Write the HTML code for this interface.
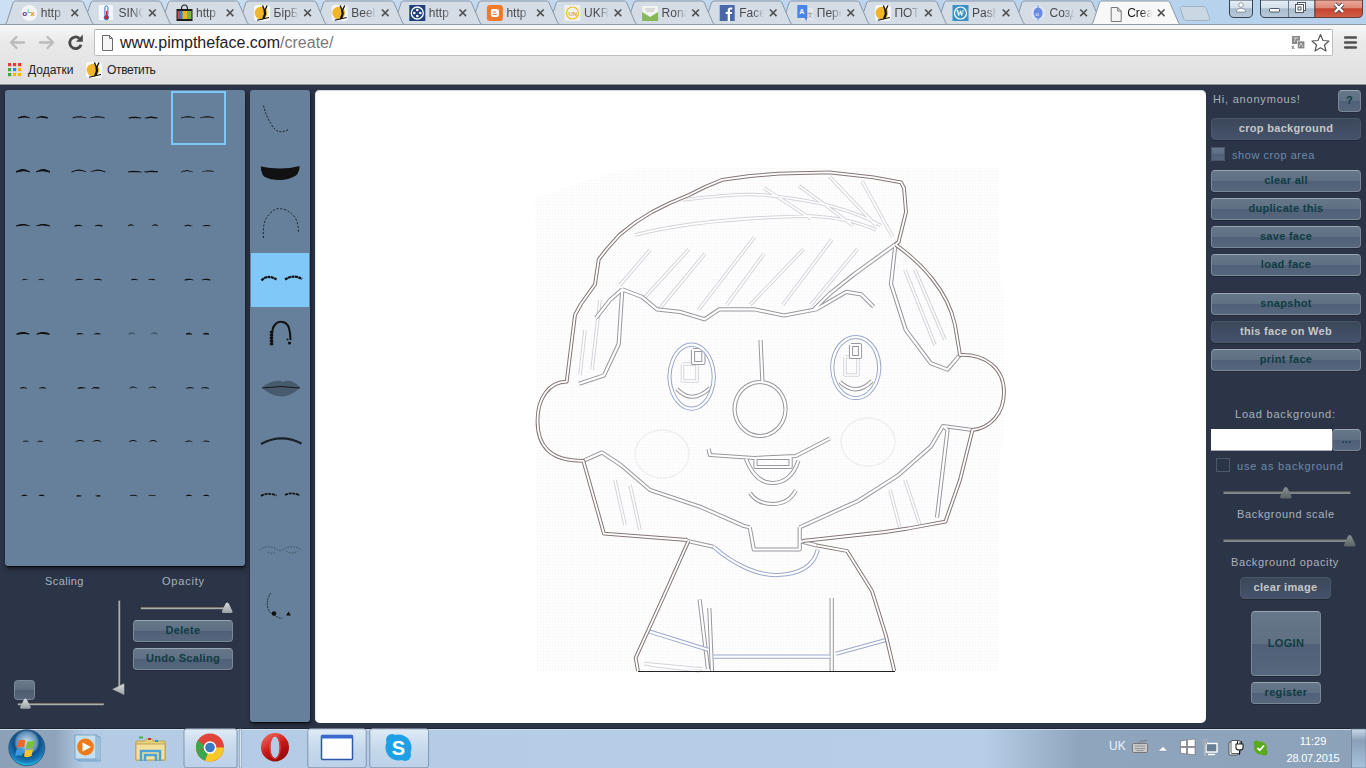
<!DOCTYPE html>
<html><head><meta charset="utf-8">
<style>
*{margin:0;padding:0;box-sizing:border-box}
html,body{width:1366px;height:768px;overflow:hidden;font-family:"Liberation Sans",sans-serif}
body{position:relative;background:#2c3547}
.a{position:absolute}
/* chrome frame */
#frame{left:0;top:0;width:1366px;height:25px;background:linear-gradient(90deg,#cde0f3 0%,#c4daf0 30%,#bad4ee 70%,#b5d1ec 100%)}
.tab{position:absolute;top:1px;height:24px;width:94px}
.tab svg{position:absolute;left:0;top:0}
.tab .fi{position:absolute;left:14px;top:4px;width:16px;height:16px}
.tab .tt{position:absolute;left:34px;top:4px;font-size:12px;color:#3c3c3c;width:24px;overflow:hidden;white-space:nowrap;line-height:14px}
.tab .cx{position:absolute;left:64px;top:5px;width:10px;height:10px}
#toolbar{left:0;top:25px;width:1366px;height:60px;background:linear-gradient(#f7f7f7,#e9e9e9 30%,#dfdfdf)}
#omni{left:94px;top:29px;width:1239px;height:27px;background:#fff;border:1px solid #bdbdbd;border-top-color:#a9a9a9;border-radius:2px}
#url{left:120px;top:34px;font-size:16px;color:#222;line-height:18px;white-space:nowrap}
#url span{color:#7a7a7a}
.bm{font-size:12px;color:#222;line-height:14px;white-space:nowrap}
/* page */
.panel{background:#66809b;border-radius:3px}
.lbl{font-size:11px;color:#a9b2bb;letter-spacing:0.8px;white-space:nowrap;line-height:12px}
.btn{position:absolute;border-radius:4px;border:1px solid #7b8797;border-top-color:#9aa6b3;background:linear-gradient(#66778a 0%,#5f7084 50%,#506078 50%,#56667c 100%);font-weight:bold;font-size:11px;color:#0f3d43;text-align:center;letter-spacing:0.3px;white-space:nowrap;box-shadow:0 1px 0 #22293a}
.btn.dis{background:linear-gradient(#3b475a,#45526a);border-color:#4b5668;color:#c4c8c9}
.chk{position:absolute;width:14px;height:14px;border:1px solid #4a5668;background:linear-gradient(#66778a 0%,#5c6d82 50%,#4e5f77 50%,#56667c 100%)}
.track{position:absolute;height:3px;border-top:1px solid #7d7a6e;border-bottom:1px solid #aeb2b0;background:#5d6270}
/* taskbar */
#task{left:0;top:728px;width:1366px;height:40px;background:linear-gradient(90deg,#8ea2b8 0px,#a9c2dc 100px,#b6d0ea 180px,#b4cde6 950px,#95aac0 1080px,#8ca1b8 1366px);border-top:1px solid #dfe9f3}
.tb{position:absolute;top:1px;height:39px;border:1px solid #7a8ea4;border-radius:3px;background:linear-gradient(#d8e6f4,#bcd3ea 50%,#b1c9e2)}
.clock{color:#fff;font-size:11px;text-align:center;white-space:nowrap;line-height:13px}
</style></head>
<body>
<!-- FRAME / TABS -->
<div id="frame" class="a"></div>
<!--TABS--><svg class="a" style="left:0;top:0" width="1366" height="25">
<defs><linearGradient id="tfade" x1="0" x2="1"><stop offset="0.55" stop-color="#fff" stop-opacity="1"/><stop offset="1" stop-color="#fff" stop-opacity="0"/></linearGradient>
<mask id="fm" maskUnits="userSpaceOnUse" x="0" y="0" width="25" height="25"><rect x="0" y="0" width="25" height="25" fill="url(#tfade)"/></mask></defs>
<path d="M1012.3,24.5 C1014.3,24.5 1015.1,23.5 1015.6,22 L1021.8,3 C1022.4,1.5 1023.3,1 1025.3,1 L1088.9,1 C1090.9,1 1091.8,1.5 1092.4,3 L1100.6,22 C1101.1,23.5 1101.9,24.5 1103.9,24.5" fill="#d4dce6" stroke="#8a97a6" stroke-width="1"/>
<g transform="translate(1030.1,5)"><circle cx="8" cy="8" r="7" fill="#e0e6f2"/><path d="M8 0.5 L8 15.5" stroke="#6a8ae8" stroke-width="1"/><ellipse cx="8" cy="8" rx="4.5" ry="5.5" fill="#6a8ae8"/><text x="5.5" y="10.5" font-size="6" fill="#fff" font-family="Liberation Sans">u</text></g>
<g transform="translate(1049.6,0)"><text x="0" y="17" font-size="12" fill="#4a4a4a" font-family="Liberation Sans" mask="url(#fm)">Созд</text></g>
<path d="M1080.3,9.5 L1086.9,16.1 M1086.9,9.5 L1080.3,16.1" stroke="#505050" stroke-width="1.6"/>
<path d="M934.7,24.5 C936.7,24.5 937.5,23.5 938.0,22 L944.2,3 C944.8,1.5 945.7,1 947.7,1 L1011.3,1 C1013.3,1 1014.2,1.5 1014.8,3 L1023.0,22 C1023.5,23.5 1024.3,24.5 1026.3,24.5" fill="#d4dce6" stroke="#8a97a6" stroke-width="1"/>
<g transform="translate(952.5,5)"><rect x="0" y="0" width="16" height="16" fill="#3a91c4"/><circle cx="8" cy="8" r="6" fill="none" stroke="#fff" stroke-width="1.2"/><text x="3.4" y="11" font-size="8" fill="#fff" font-family="Liberation Serif" font-weight="bold">W</text></g>
<g transform="translate(972.0,0)"><text x="0" y="17" font-size="12" fill="#4a4a4a" font-family="Liberation Sans" mask="url(#fm)">Pashа</text></g>
<path d="M1002.7,9.5 L1009.3,16.1 M1009.3,9.5 L1002.7,16.1" stroke="#505050" stroke-width="1.6"/>
<path d="M857.1,24.5 C859.1,24.5 859.9,23.5 860.4,22 L866.6,3 C867.2,1.5 868.1,1 870.1,1 L933.7,1 C935.7,1 936.6,1.5 937.2,3 L945.4,22 C945.9,23.5 946.7,24.5 948.7,24.5" fill="#d4dce6" stroke="#8a97a6" stroke-width="1"/>
<g transform="translate(874.9,5)"><rect x="0" y="0" width="16" height="16" rx="3" fill="#f6f6f6"/><circle cx="7" cy="8" r="6.3" fill="#f0b628"/><path d="M8.5 0.5 L10.5 6 L13 0.5" stroke="#111" stroke-width="1.3" fill="none"/><path d="M10.5 5.5 L11 9 L9.5 13" stroke="#111" stroke-width="2.2" fill="none"/><path d="M9.5 12 L8.5 14.5 M3 15.2 L15 12.5" stroke="#111" stroke-width="1.1" fill="none"/></g>
<g transform="translate(894.4,0)"><text x="0" y="17" font-size="12" fill="#4a4a4a" font-family="Liberation Sans" mask="url(#fm)">ПОТ</text></g>
<path d="M925.1,9.5 L931.7,16.1 M931.7,9.5 L925.1,16.1" stroke="#505050" stroke-width="1.6"/>
<path d="M779.5,24.5 C781.5,24.5 782.3,23.5 782.8,22 L789.0,3 C789.6,1.5 790.5,1 792.5,1 L856.1,1 C858.1,1 859.0,1.5 859.6,3 L867.8,22 C868.3,23.5 869.1,24.5 871.1,24.5" fill="#d4dce6" stroke="#8a97a6" stroke-width="1"/>
<g transform="translate(797.3,5)"><rect x="4" y="3" width="12" height="12" fill="#e6e6e6"/><path d="M0 0 H10 V13 L9 16 L7 13 H0Z" fill="#4a86e8"/><text x="2" y="9" font-size="7" fill="#fff" font-family="Liberation Sans" font-weight="bold">A</text><text x="10" y="12" font-size="6" fill="#888" font-family="Liberation Sans">文</text></g>
<g transform="translate(816.8,0)"><text x="0" y="17" font-size="12" fill="#4a4a4a" font-family="Liberation Sans" mask="url(#fm)">Пере</text></g>
<path d="M847.5,9.5 L854.1,16.1 M854.1,9.5 L847.5,16.1" stroke="#505050" stroke-width="1.6"/>
<path d="M701.9,24.5 C703.9,24.5 704.7,23.5 705.2,22 L711.4,3 C712.0,1.5 712.9,1 714.9,1 L778.5,1 C780.5,1 781.4,1.5 782.0,3 L790.2,22 C790.7,23.5 791.5,24.5 793.5,24.5" fill="#d4dce6" stroke="#8a97a6" stroke-width="1"/>
<g transform="translate(719.7,5)"><rect x="0" y="0" width="15" height="16" fill="#4a67a8"/><path d="M8 16 V9 H6 V7 H8 V5 Q8 2.5 11 2.5 H12.5 V4.5 H11 Q10.3 4.5 10.3 5.3 V7 H12.5 L12.2 9 H10.3 V16Z" fill="#fff"/></g>
<g transform="translate(739.2,0)"><text x="0" y="17" font-size="12" fill="#4a4a4a" font-family="Liberation Sans" mask="url(#fm)">Face</text></g>
<path d="M769.9,9.5 L776.5,16.1 M776.5,9.5 L769.9,16.1" stroke="#505050" stroke-width="1.6"/>
<path d="M624.3,24.5 C626.3,24.5 627.1,23.5 627.6,22 L633.8,3 C634.4,1.5 635.3,1 637.3,1 L700.9,1 C702.9,1 703.8,1.5 704.4,3 L712.6,22 C713.1,23.5 713.9,24.5 715.9,24.5" fill="#d4dce6" stroke="#8a97a6" stroke-width="1"/>
<g transform="translate(642.1,5)"><rect x="0" y="1" width="16" height="15" fill="#86b85a"/><path d="M0 7 L8 12 L16 7 L16 1 L0 1Z" fill="#f2f2f2"/><path d="M3 4 H13 M4 6 H12" stroke="#9a9a9a" stroke-width="0.6"/></g>
<g transform="translate(661.6,0)"><text x="0" y="17" font-size="12" fill="#4a4a4a" font-family="Liberation Sans" mask="url(#fm)">Ronaldo</text></g>
<path d="M692.3,9.5 L698.9,16.1 M698.9,9.5 L692.3,16.1" stroke="#505050" stroke-width="1.6"/>
<path d="M546.7,24.5 C548.7,24.5 549.5,23.5 550.0,22 L556.2,3 C556.8,1.5 557.7,1 559.7,1 L623.3,1 C625.3,1 626.2,1.5 626.8,3 L635.0,22 C635.5,23.5 636.3,24.5 638.3,24.5" fill="#d4dce6" stroke="#8a97a6" stroke-width="1"/>
<g transform="translate(564.5,5)"><rect x="0" y="0" width="16" height="16" fill="#eef0f2"/><circle cx="8" cy="8" r="6" fill="none" stroke="#f0c020" stroke-width="1.2"/><text x="4" y="10.5" font-size="6" fill="#e0b010" font-family="Liberation Sans" font-weight="bold">UN</text></g>
<g transform="translate(584.0,0)"><text x="0" y="17" font-size="12" fill="#4a4a4a" font-family="Liberation Sans" mask="url(#fm)">UKR</text></g>
<path d="M614.7,9.5 L621.3,16.1 M621.3,9.5 L614.7,16.1" stroke="#505050" stroke-width="1.6"/>
<path d="M469.1,24.5 C471.1,24.5 471.9,23.5 472.4,22 L478.6,3 C479.2,1.5 480.1,1 482.1,1 L545.7,1 C547.7,1 548.6,1.5 549.2,3 L557.4,22 C557.9,23.5 558.7,24.5 560.7,24.5" fill="#d4dce6" stroke="#8a97a6" stroke-width="1"/>
<g transform="translate(486.9,5)"><rect x="0" y="0" width="16" height="16" rx="3" fill="#f07a2a"/><rect x="4" y="4" width="8" height="8" rx="2" fill="#fff"/><rect x="6" y="6.5" width="3" height="1" fill="#f07a2a"/><rect x="6" y="9" width="4" height="1" fill="#f07a2a"/></g>
<g transform="translate(506.4,0)"><text x="0" y="17" font-size="12" fill="#4a4a4a" font-family="Liberation Sans" mask="url(#fm)">http</text></g>
<path d="M537.1,9.5 L543.7,16.1 M543.7,9.5 L537.1,16.1" stroke="#505050" stroke-width="1.6"/>
<path d="M391.5,24.5 C393.5,24.5 394.3,23.5 394.8,22 L401.0,3 C401.6,1.5 402.5,1 404.5,1 L468.1,1 C470.1,1 471.0,1.5 471.6,3 L479.8,22 C480.3,23.5 481.1,24.5 483.1,24.5" fill="#d4dce6" stroke="#8a97a6" stroke-width="1"/>
<g transform="translate(409.3,5)"><rect x="0" y="0" width="16" height="16" fill="#1e3f7a"/><circle cx="8" cy="8" r="6" fill="none" stroke="#fff" stroke-width="1.3"/><circle cx="8" cy="5" r="1.3" fill="#fff"/><circle cx="8" cy="11" r="1.3" fill="#fff"/><circle cx="5" cy="8" r="1.3" fill="#fff"/><circle cx="11" cy="8" r="1.3" fill="#fff"/></g>
<g transform="translate(428.8,0)"><text x="0" y="17" font-size="12" fill="#4a4a4a" font-family="Liberation Sans" mask="url(#fm)">http</text></g>
<path d="M459.5,9.5 L466.1,16.1 M466.1,9.5 L459.5,16.1" stroke="#505050" stroke-width="1.6"/>
<path d="M313.9,24.5 C315.9,24.5 316.7,23.5 317.2,22 L323.4,3 C324.0,1.5 324.9,1 326.9,1 L390.5,1 C392.5,1 393.4,1.5 394.0,3 L402.2,22 C402.7,23.5 403.5,24.5 405.5,24.5" fill="#d4dce6" stroke="#8a97a6" stroke-width="1"/>
<g transform="translate(331.7,5)"><rect x="0" y="0" width="16" height="16" rx="3" fill="#f6f6f6"/><circle cx="7" cy="8" r="6.3" fill="#f0b628"/><path d="M8.5 0.5 L10.5 6 L13 0.5" stroke="#111" stroke-width="1.3" fill="none"/><path d="M10.5 5.5 L11 9 L9.5 13" stroke="#111" stroke-width="2.2" fill="none"/><path d="M9.5 12 L8.5 14.5 M3 15.2 L15 12.5" stroke="#111" stroke-width="1.1" fill="none"/></g>
<g transform="translate(351.2,0)"><text x="0" y="17" font-size="12" fill="#4a4a4a" font-family="Liberation Sans" mask="url(#fm)">Beeline</text></g>
<path d="M381.9,9.5 L388.5,16.1 M388.5,9.5 L381.9,16.1" stroke="#505050" stroke-width="1.6"/>
<path d="M236.3,24.5 C238.3,24.5 239.1,23.5 239.6,22 L245.8,3 C246.4,1.5 247.3,1 249.3,1 L312.9,1 C314.9,1 315.8,1.5 316.4,3 L324.6,22 C325.1,23.5 325.9,24.5 327.9,24.5" fill="#d4dce6" stroke="#8a97a6" stroke-width="1"/>
<g transform="translate(254.1,5)"><rect x="0" y="0" width="16" height="16" rx="3" fill="#f6f6f6"/><circle cx="7" cy="8" r="6.3" fill="#f0b628"/><path d="M8.5 0.5 L10.5 6 L13 0.5" stroke="#111" stroke-width="1.3" fill="none"/><path d="M10.5 5.5 L11 9 L9.5 13" stroke="#111" stroke-width="2.2" fill="none"/><path d="M9.5 12 L8.5 14.5 M3 15.2 L15 12.5" stroke="#111" stroke-width="1.1" fill="none"/></g>
<g transform="translate(273.6,0)"><text x="0" y="17" font-size="12" fill="#4a4a4a" font-family="Liberation Sans" mask="url(#fm)">БірБ</text></g>
<path d="M304.3,9.5 L310.9,16.1 M310.9,9.5 L304.3,16.1" stroke="#505050" stroke-width="1.6"/>
<path d="M158.7,24.5 C160.7,24.5 161.5,23.5 162.0,22 L168.2,3 C168.8,1.5 169.7,1 171.7,1 L235.3,1 C237.3,1 238.2,1.5 238.8,3 L247.0,22 C247.5,23.5 248.3,24.5 250.3,24.5" fill="#d4dce6" stroke="#8a97a6" stroke-width="1"/>
<g transform="translate(176.5,5)"><path d="M5 4 Q5 0 8 0 Q11 0 11 4" fill="none" stroke="#222" stroke-width="1.2"/><rect x="0" y="4" width="16" height="12" fill="#1d1d1d"/><rect x="1" y="6" width="4.5" height="8" fill="#e0403a"/><rect x="5.5" y="6" width="5" height="8" fill="#f3b21b"/><rect x="10.5" y="6" width="4.5" height="8" fill="#7db540"/><rect x="3" y="6" width="3" height="8" fill="#2a7fd0"/></g>
<g transform="translate(196.0,0)"><text x="0" y="17" font-size="12" fill="#4a4a4a" font-family="Liberation Sans" mask="url(#fm)">http</text></g>
<path d="M226.7,9.5 L233.3,16.1 M233.3,9.5 L226.7,16.1" stroke="#505050" stroke-width="1.6"/>
<path d="M81.1,24.5 C83.1,24.5 83.9,23.5 84.4,22 L90.6,3 C91.2,1.5 92.1,1 94.1,1 L157.7,1 C159.7,1 160.6,1.5 161.2,3 L169.4,22 C169.9,23.5 170.7,24.5 172.7,24.5" fill="#d4dce6" stroke="#8a97a6" stroke-width="1"/>
<g transform="translate(98.9,5)"><rect x="0" y="0" width="14" height="15" fill="#f4f7fb"/><rect x="6" y="1" width="3" height="10" rx="1.5" fill="#fff" stroke="#2a6ad0" stroke-width="1"/><rect x="7" y="6" width="1.6" height="6" fill="#e02020"/><circle cx="7.5" cy="12.5" r="2.3" fill="#e02020" stroke="#2a6ad0" stroke-width="0.8"/></g>
<g transform="translate(118.4,0)"><text x="0" y="17" font-size="12" fill="#4a4a4a" font-family="Liberation Sans" mask="url(#fm)">SINOP</text></g>
<path d="M149.1,9.5 L155.7,16.1 M155.7,9.5 L149.1,16.1" stroke="#505050" stroke-width="1.6"/>
<path d="M3.5,24.5 C5.5,24.5 6.3,23.5 6.8,22 L13.0,3 C13.6,1.5 14.5,1 16.5,1 L80.1,1 C82.1,1 83.0,1.5 83.6,3 L91.8,22 C92.3,23.5 93.1,24.5 95.1,24.5" fill="#d4dce6" stroke="#8a97a6" stroke-width="1"/>
<g transform="translate(21.3,5)"><circle cx="8" cy="8" r="8" fill="#f4f4f4"/><text x="1" y="11" font-size="8" font-weight="bold" fill="#6a2c91" font-family="Liberation Sans">o</text><text x="6" y="8" font-size="6" fill="#3fa33a" font-family="Liberation Sans">L</text><text x="9" y="11" font-size="8" font-weight="bold" fill="#f08a1c" font-family="Liberation Sans">x</text></g>
<g transform="translate(40.8,0)"><text x="0" y="17" font-size="12" fill="#4a4a4a" font-family="Liberation Sans" mask="url(#fm)">http</text></g>
<path d="M71.5,9.5 L78.1,16.1 M78.1,9.5 L71.5,16.1" stroke="#505050" stroke-width="1.6"/>
<path d="M1089.9,24.5 C1091.9,24.5 1092.7,23.5 1093.2,22 L1099.4,3 C1100.0,1.5 1100.9,1 1102.9,1 L1166.5,1 C1168.5,1 1169.4,1.5 1170.0,3 L1178.2,22 C1178.7,23.5 1179.5,24.5 1181.5,24.5" fill="#f8f8f8" stroke="#8f9aa5" stroke-width="1"/>
<rect x="1091.7" y="24" width="100" height="1.5" fill="#f8f8f8"/>
<g transform="translate(1107.7,5)"><path d="M3.5 2.5 H10 L13.5 6 V16.5 H3.5Z" fill="#f4f4f4" stroke="#777" stroke-width="1"/><path d="M10 2.5 V6 H13.5" fill="none" stroke="#777" stroke-width="1"/></g>
<g transform="translate(1127.2,0)"><text x="0" y="17" font-size="12" fill="#1a1a1a" font-family="Liberation Sans" mask="url(#fm)">Crea</text></g>
<path d="M1157.9,9.5 L1164.5,16.1 M1164.5,9.5 L1157.9,16.1" stroke="#505050" stroke-width="1.6"/>
<path d="M1182.5,6.5 L1203,6.5 C1205,6.5 1206,7.5 1206.5,9 L1209.5,18 C1210,19.5 1209,20.5 1207,20.5 L1187,20.5 C1185,20.5 1184,19.5 1183.5,18 L1180.5,9 C1180,7.5 1180.5,6.5 1182.5,6.5Z" fill="#cbd8e4" stroke="#9fb2c6" stroke-width="1"/>
</svg><!--/TABS-->

<div id="toolbar" class="a"></div>
<div class="a" style="left:0;top:24px;width:1366px;height:1px;background:#8f9aa5"></div>
<div class="a" style="left:0;top:83px;width:1366px;height:1px;background:#e7e7e7"></div>
<div class="a" style="left:0;top:84px;width:1366px;height:1px;background:#8a8f96"></div>
<div id="omni" class="a"></div>
<!--CHROME-->
<svg class="a" style="left:0;top:0" width="1366" height="85">
<defs>
<linearGradient id="wb" x1="0" y1="0" x2="0" y2="1"><stop offset="0" stop-color="#e6eef6"/><stop offset="0.45" stop-color="#d3dfeb"/><stop offset="0.5" stop-color="#a9bccf"/><stop offset="1" stop-color="#b8c9da"/></linearGradient>
<linearGradient id="wc" x1="0" y1="0" x2="0" y2="1"><stop offset="0" stop-color="#ecaa9c"/><stop offset="0.45" stop-color="#dd8a78"/><stop offset="0.5" stop-color="#c4422c"/><stop offset="1" stop-color="#d0604a"/></linearGradient>
</defs>
<path d="M1229.5,0 V13 Q1229.5,17.5 1234,17.5 H1248 Q1252.5,17.5 1252.5,13 V0Z" fill="url(#wb)" stroke="#3a4450" stroke-width="1"/>
<circle cx="1241" cy="5" r="2.3" fill="#fff" stroke="#4a5563" stroke-width="0.5"/>
<path d="M1236.5,12 Q1236.5,8.3 1241,8.3 Q1245.5,8.3 1245.5,12Z" fill="#fff" stroke="#4a5563" stroke-width="0.5"/>
<path d="M1260.5,0 V13 Q1260.5,17.5 1265,17.5 H1315 V0Z" fill="url(#wb)" stroke="#3a4450" stroke-width="1"/>
<path d="M1315,0 V17.5 H1358 Q1362.5,17.5 1362.5,13 V0Z" fill="url(#wc)" stroke="#6a3a34" stroke-width="1"/>
<line x1="1288.5" y1="0" x2="1288.5" y2="17" stroke="#6a7a8c" stroke-width="1"/>
<rect x="1269.5" y="8.5" width="10" height="3.5" rx="0.8" fill="#fff" stroke="#404a55" stroke-width="0.9"/>
<rect x="1297.5" y="2.5" width="8" height="8" fill="#fff" stroke="#404a55" stroke-width="0.9"/>
<rect x="1295.5" y="4.5" width="8" height="8" fill="#fff" stroke="#404a55" stroke-width="0.9"/>
<rect x="1298" y="7" width="3" height="3" fill="none" stroke="#404a55" stroke-width="0.9"/>
<path d="M1335,4 L1343,12 M1343,4 L1335,12" stroke="#4a4a55" stroke-width="4"/>
<path d="M1335,4 L1343,12 M1343,4 L1335,12" stroke="#fff" stroke-width="2.4"/>
<!-- nav -->
<g fill="none" stroke="#bcbcbc" stroke-width="2.3" stroke-linecap="round" stroke-linejoin="round">
<path d="M11,42.5 H24 M16.5,37 L11,42.5 L16.5,48"/>
<path d="M40,42.5 H53 M47.5,37 L53,42.5 L47.5,48"/>
</g>
<path d="M79.3,38.3 A5.8,5.8 0 1 0 81.05,44.7" fill="none" stroke="#4a4a4a" stroke-width="2.8"/>
<path d="M82.8,34.6 L82.8,41.8 L76,41.8Z" fill="#4a4a4a"/>
<path d="M102.5,35.5 H109.5 L112.5,38.5 V50.5 H102.5Z" fill="#f6f6f6" stroke="#6a6a6a" stroke-width="1"/>
<path d="M109.5,35.5 V38.5 H112.5" fill="none" stroke="#6a6a6a" stroke-width="1"/>
<!-- translate -->
<rect x="1292" y="36" width="8" height="8" fill="#888"/>
<path d="M1293.5,38 H1298.5 M1296,38 L1294,42" stroke="#ddd" stroke-width="0.9"/>
<rect x="1297.3" y="41" width="7.5" height="7.8" fill="#888" stroke="#fff" stroke-width="0.6"/>
<path d="M1299,47 L1301,43 L1303,47" fill="none" stroke="#ddd" stroke-width="0.9"/>
<path d="M1291.5,46 L1294.5,49 M1293.5,45.5 L1292.5,49" stroke="#777" stroke-width="0.9"/>
<path d="M1320.5,34.5 L1323,40.5 L1329,41 L1324.5,45 L1326,51 L1320.5,47.8 L1315,51 L1316.5,45 L1312,41 L1318,40.5Z" fill="#fff" stroke="#5a5a5a" stroke-width="1.2" stroke-linejoin="round"/>
<g stroke="#505050" stroke-width="2.6" stroke-linecap="round"><path d="M1345.2,37.5 H1355.8 M1345.2,42.5 H1355.8 M1345.2,47.5 H1355.8"/></g>
<!-- bookmarks -->
<g>
<rect x="8" y="63" width="3.2" height="3.2" fill="#e53935"/><rect x="13" y="63" width="3.2" height="3.2" fill="#e53935"/><rect x="18" y="63" width="3.2" height="3.2" fill="#e53935"/>
<rect x="8" y="68" width="3.2" height="3.2" fill="#43a047"/><rect x="13" y="68" width="3.2" height="3.2" fill="#1e88e5"/><rect x="18" y="68" width="3.2" height="3.2" fill="#fbb300"/>
<rect x="8" y="73" width="3.2" height="3.2" fill="#43a047"/><rect x="13" y="73" width="3.2" height="3.2" fill="#fbb300"/><rect x="18" y="73" width="3.2" height="3.2" fill="#fbb300"/>
</g>
<g transform="translate(86,62)"><rect x="0" y="0" width="16" height="16" rx="3" fill="#f8f8f8"/><circle cx="7" cy="8" r="6.3" fill="#f0b628"/><path d="M8.5 0.5 L10.5 6 L13 0.5" stroke="#111" stroke-width="1.3" fill="none"/><path d="M10.5 5.5 L11 9 L9.5 13" stroke="#111" stroke-width="2.2" fill="none"/><path d="M9.5 12 L8.5 14.5 M3 15.2 L15 12.5" stroke="#111" stroke-width="1.1" fill="none"/></g>
</svg>
<div class="a bm" style="left:28px;top:63px">Додатки</div>
<div class="a bm" style="left:107px;top:63px;letter-spacing:-0.35px">Ответить</div>
<!--/CHROME-->
<div id="url" class="a">www.pimptheface.com<span>/create/</span></div>

<!-- PAGE -->
<div class="a panel" style="left:5px;top:90px;width:240px;height:476px;box-shadow:0 1px 1px rgba(0,0,0,0.6),1px 3px 4px rgba(0,0,0,0.5)"></div>
<div class="a panel" style="left:250px;top:90px;width:60px;height:632px;box-shadow:0 1px 1px rgba(0,0,0,0.6),1px 3px 4px rgba(0,0,0,0.5)"></div>
<div class="a" style="left:251px;top:253px;width:58px;height:54px;background:#80c8f8"></div>
<div class="a" style="left:171px;top:91px;width:55px;height:54px;border:2px solid #7cc6f8"></div>
<!--THUMBS--><svg class="a" style="left:0;top:0" width="320" height="640"><path d="M18.0,117.3 L19.2,117.0 L20.4,116.5 L21.6,116.3 L22.8,116.1 L24.0,115.7 L25.2,115.8 L26.4,116.5 L27.6,116.6 L28.8,117.1 L30.0,117.9 L30.0,118.5 L28.8,117.9 L27.6,117.8 L26.4,117.9 L25.2,117.4 L24.0,117.4 L22.8,117.8 L21.6,117.9 L20.4,118.0 L19.2,118.3 L18.0,118.4Z M36.0,117.7 L37.2,117.4 L38.4,116.7 L39.6,116.4 L40.8,115.9 L42.0,116.0 L43.2,116.2 L44.4,116.2 L45.6,116.6 L46.8,117.0 L48.0,117.2 L48.0,118.3 L46.8,118.4 L45.6,118.2 L44.4,117.9 L43.2,117.9 L42.0,117.7 L40.8,117.5 L39.6,117.8 L38.4,117.9 L37.2,118.2 L36.0,118.3Z" fill="#111" opacity="1"/><path d="M72.5,117.6 L73.9,117.1 L75.3,116.7 L76.7,116.4 L78.1,116.2 L79.5,116.2 L80.9,116.3 L82.3,116.5 L83.7,116.9 L85.1,117.3 L86.5,117.8 L86.5,118.2 L85.1,118.0 L83.7,117.7 L82.3,117.5 L80.9,117.4 L79.5,117.4 L78.1,117.5 L76.7,117.6 L75.3,117.8 L73.9,118.1 L72.5,118.4Z M90.5,117.8 L91.9,117.3 L93.3,116.9 L94.7,116.5 L96.1,116.3 L97.5,116.2 L98.9,116.2 L100.3,116.4 L101.7,116.7 L103.1,117.1 L104.5,117.6 L104.5,118.4 L103.1,118.1 L101.7,117.8 L100.3,117.6 L98.9,117.5 L97.5,117.4 L96.1,117.4 L94.7,117.5 L93.3,117.7 L91.9,118.0 L90.5,118.2Z" fill="#111" opacity="1"/><path d="M128.5,117.6 L129.8,117.3 L131.1,116.9 L132.4,116.5 L133.7,116.9 L135.0,116.6 L136.3,116.8 L137.6,117.1 L138.9,117.2 L140.2,117.6 L141.5,117.7 L141.5,118.2 L140.2,118.4 L138.9,118.3 L137.6,118.3 L136.3,118.2 L135.0,118.1 L133.7,118.4 L132.4,118.0 L131.1,118.2 L129.8,118.5 L128.5,118.6Z M144.5,117.9 L145.8,117.4 L147.1,117.3 L148.4,117.1 L149.7,116.5 L151.0,116.5 L152.3,116.5 L153.6,117.0 L154.9,116.9 L156.2,117.3 L157.5,117.4 L157.5,118.4 L156.2,118.5 L154.9,118.3 L153.6,118.5 L152.3,118.0 L151.0,118.0 L149.7,117.9 L148.4,118.3 L147.1,118.4 L145.8,118.2 L144.5,118.4Z" fill="#111" opacity="1"/><path d="M181.0,117.6 L182.4,117.2 L183.8,116.8 L185.2,116.5 L186.6,116.3 L188.0,116.2 L189.4,116.3 L190.8,116.6 L192.2,116.9 L193.6,117.3 L195.0,117.8 L195.0,118.2 L193.6,117.9 L192.2,117.7 L190.8,117.5 L189.4,117.4 L188.0,117.4 L186.6,117.4 L185.2,117.6 L183.8,117.8 L182.4,118.1 L181.0,118.4Z M200.0,117.8 L201.4,117.3 L202.8,116.9 L204.2,116.6 L205.6,116.3 L207.0,116.2 L208.4,116.3 L209.8,116.5 L211.2,116.8 L212.6,117.2 L214.0,117.6 L214.0,118.4 L212.6,118.1 L211.2,117.8 L209.8,117.6 L208.4,117.4 L207.0,117.4 L205.6,117.4 L204.2,117.5 L202.8,117.7 L201.4,117.9 L200.0,118.2Z" fill="#111" opacity="1"/><path d="M16.0,171.3 L17.4,170.5 L18.8,169.9 L20.2,169.4 L21.6,169.1 L23.0,169.1 L24.4,169.2 L25.8,169.6 L27.2,170.2 L28.6,170.8 L30.0,171.6 L30.0,172.4 L28.6,172.0 L27.2,171.7 L25.8,171.5 L24.4,171.3 L23.0,171.3 L21.6,171.4 L20.2,171.7 L18.8,172.0 L17.4,172.3 L16.0,172.7Z M36.0,171.6 L37.4,170.8 L38.8,170.2 L40.2,169.6 L41.6,169.2 L43.0,169.1 L44.4,169.1 L45.8,169.4 L47.2,169.9 L48.6,170.5 L50.0,171.3 L50.0,172.7 L48.6,172.3 L47.2,172.0 L45.8,171.7 L44.4,171.4 L43.0,171.3 L41.6,171.3 L40.2,171.5 L38.8,171.7 L37.4,172.0 L36.0,172.4Z" fill="#111" opacity="1"/><path d="M71.5,171.6 L73.0,171.0 L74.5,170.4 L76.0,169.9 L77.5,169.7 L79.0,169.6 L80.5,169.7 L82.0,170.0 L83.5,170.5 L85.0,171.1 L86.5,171.8 L86.5,172.2 L85.0,171.8 L83.5,171.4 L82.0,171.0 L80.5,170.9 L79.0,170.8 L77.5,170.9 L76.0,171.1 L74.5,171.5 L73.0,171.9 L71.5,172.4Z M90.5,171.8 L92.0,171.1 L93.5,170.5 L95.0,170.0 L96.5,169.7 L98.0,169.6 L99.5,169.7 L101.0,169.9 L102.5,170.4 L104.0,171.0 L105.5,171.6 L105.5,172.4 L104.0,171.9 L102.5,171.5 L101.0,171.1 L99.5,170.9 L98.0,170.8 L96.5,170.9 L95.0,171.0 L93.5,171.4 L92.0,171.8 L90.5,172.2Z" fill="#111" opacity="1"/><path d="M128.0,171.5 L129.4,171.2 L130.8,170.9 L132.2,170.9 L133.6,170.8 L135.0,170.9 L136.4,170.9 L137.8,171.1 L139.2,171.3 L140.6,171.7 L142.0,171.8 L142.0,172.3 L140.6,172.4 L139.2,172.3 L137.8,172.3 L136.4,172.2 L135.0,172.3 L133.6,172.2 L132.2,172.2 L130.8,172.2 L129.4,172.3 L128.0,172.5Z M144.0,171.6 L145.4,171.6 L146.8,171.4 L148.2,171.1 L149.6,170.8 L151.0,170.8 L152.4,170.6 L153.8,171.0 L155.2,171.0 L156.6,171.1 L158.0,171.3 L158.0,172.2 L156.6,172.3 L155.2,172.3 L153.8,172.4 L152.4,172.0 L151.0,172.2 L149.6,172.1 L148.2,172.3 L146.8,172.4 L145.4,172.4 L144.0,172.1Z" fill="#111" opacity="1"/><path d="M181.0,171.8 L182.2,171.5 L183.4,170.6 L184.6,170.7 L185.8,170.3 L187.0,170.1 L188.2,170.3 L189.4,170.7 L190.6,171.1 L191.8,171.1 L193.0,171.9 L193.0,172.2 L191.8,171.7 L190.6,171.8 L189.4,171.6 L188.2,171.2 L187.0,171.1 L185.8,171.3 L184.6,171.7 L183.4,171.6 L182.2,172.3 L181.0,172.5Z M202.0,171.6 L203.2,171.5 L204.4,170.9 L205.6,170.8 L206.8,170.6 L208.0,170.3 L209.2,170.6 L210.4,170.4 L211.6,170.6 L212.8,171.3 L214.0,171.4 L214.0,172.1 L212.8,172.1 L211.6,171.6 L210.4,171.4 L209.2,171.6 L208.0,171.3 L206.8,171.6 L205.6,171.6 L204.4,171.6 L203.2,172.0 L202.0,172.0Z" fill="#111" opacity="1"/><path d="M16.0,225.4 L17.4,225.0 L18.8,224.5 L20.2,224.2 L21.6,224.0 L23.0,224.0 L24.4,224.1 L25.8,224.3 L27.2,224.7 L28.6,225.2 L30.0,225.7 L30.0,226.3 L28.6,226.1 L27.2,225.9 L25.8,225.7 L24.4,225.6 L23.0,225.6 L21.6,225.7 L20.2,225.9 L18.8,226.1 L17.4,226.3 L16.0,226.6Z M36.0,225.7 L37.4,225.2 L38.8,224.7 L40.2,224.3 L41.6,224.1 L43.0,224.0 L44.4,224.0 L45.8,224.2 L47.2,224.5 L48.6,225.0 L50.0,225.4 L50.0,226.6 L48.6,226.3 L47.2,226.1 L45.8,225.9 L44.4,225.7 L43.0,225.6 L41.6,225.6 L40.2,225.7 L38.8,225.9 L37.4,226.1 L36.0,226.3Z" fill="#111" opacity="1"/><path d="M74.5,225.5 L75.3,225.3 L76.1,225.0 L76.9,224.8 L77.7,224.7 L78.5,224.7 L79.3,224.8 L80.1,224.9 L80.9,225.2 L81.7,225.4 L82.5,225.8 L82.5,226.2 L81.7,226.2 L80.9,226.1 L80.1,226.1 L79.3,226.1 L78.5,226.1 L77.7,226.1 L76.9,226.2 L76.1,226.3 L75.3,226.4 L74.5,226.5Z M94.5,225.8 L95.3,225.4 L96.1,225.2 L96.9,224.9 L97.7,224.8 L98.5,224.7 L99.3,224.7 L100.1,224.8 L100.9,225.0 L101.7,225.3 L102.5,225.5 L102.5,226.5 L101.7,226.4 L100.9,226.3 L100.1,226.2 L99.3,226.1 L98.5,226.1 L97.7,226.1 L96.9,226.1 L96.1,226.1 L95.3,226.2 L94.5,226.2Z" fill="#111" opacity="1"/><path d="M128.0,225.6 L128.6,225.1 L129.2,224.7 L129.8,224.4 L130.4,224.2 L131.0,224.2 L131.6,224.3 L132.2,224.5 L132.8,224.9 L133.4,225.3 L134.0,225.8 L134.0,226.2 L133.4,226.0 L132.8,225.7 L132.2,225.5 L131.6,225.4 L131.0,225.4 L130.4,225.5 L129.8,225.6 L129.2,225.8 L128.6,226.1 L128.0,226.4Z M152.0,225.8 L152.6,225.3 L153.2,224.9 L153.8,224.5 L154.4,224.3 L155.0,224.2 L155.6,224.2 L156.2,224.4 L156.8,224.7 L157.4,225.1 L158.0,225.6 L158.0,226.4 L157.4,226.1 L156.8,225.8 L156.2,225.6 L155.6,225.5 L155.0,225.4 L154.4,225.4 L153.8,225.5 L153.2,225.7 L152.6,226.0 L152.0,226.2Z" fill="#111" opacity="1"/><path d="M184.5,225.5 L185.3,225.3 L186.1,225.2 L186.9,224.8 L187.7,224.6 L188.5,225.0 L189.3,224.8 L190.1,225.3 L190.9,225.5 L191.7,225.5 L192.5,225.8 L192.5,226.2 L191.7,226.1 L190.9,226.2 L190.1,226.2 L189.3,225.9 L188.5,226.1 L187.7,225.8 L186.9,225.9 L186.1,226.2 L185.3,226.2 L184.5,226.2Z M202.5,225.8 L203.3,225.6 L204.1,225.3 L204.9,225.1 L205.7,225.0 L206.5,225.1 L207.3,224.9 L208.1,224.9 L208.9,225.2 L209.7,225.2 L210.5,225.5 L210.5,226.3 L209.7,226.1 L208.9,226.3 L208.1,226.0 L207.3,226.0 L206.5,226.2 L205.7,226.0 L204.9,226.0 L204.1,226.1 L203.3,226.2 L202.5,226.2Z" fill="#111" opacity="1"/><path d="M22.0,279.9 L22.6,279.5 L23.2,279.2 L23.8,278.8 L24.4,278.9 L25.0,279.0 L25.6,278.8 L26.2,279.2 L26.8,279.4 L27.4,279.3 L28.0,279.9 L28.0,280.2 L27.4,279.8 L26.8,280.0 L26.2,280.0 L25.6,279.6 L25.0,279.9 L24.4,279.9 L23.8,279.7 L23.2,280.1 L22.6,280.2 L22.0,280.5Z M38.0,279.8 L38.6,279.7 L39.2,279.3 L39.8,279.2 L40.4,279.1 L41.0,278.7 L41.6,278.7 L42.2,279.1 L42.8,279.5 L43.4,279.3 L44.0,279.7 L44.0,280.3 L43.4,280.1 L42.8,280.3 L42.2,280.1 L41.6,279.7 L41.0,279.6 L40.4,280.0 L39.8,280.0 L39.2,279.9 L38.6,280.2 L38.0,280.1Z" fill="#111" opacity="1"/><path d="M75.5,279.6 L76.3,279.3 L77.1,279.1 L77.9,278.9 L78.7,278.8 L79.5,278.8 L80.3,278.9 L81.1,279.0 L81.9,279.2 L82.7,279.5 L83.5,279.8 L83.5,280.2 L82.7,280.1 L81.9,280.1 L81.1,280.0 L80.3,280.0 L79.5,280.0 L78.7,280.0 L77.9,280.1 L77.1,280.2 L76.3,280.3 L75.5,280.4Z M93.5,279.8 L94.3,279.5 L95.1,279.2 L95.9,279.0 L96.7,278.9 L97.5,278.8 L98.3,278.8 L99.1,278.9 L99.9,279.1 L100.7,279.3 L101.5,279.6 L101.5,280.4 L100.7,280.3 L99.9,280.2 L99.1,280.1 L98.3,280.0 L97.5,280.0 L96.7,280.0 L95.9,280.0 L95.1,280.1 L94.3,280.1 L93.5,280.2Z" fill="#111" opacity="1"/><path d="M131.0,279.7 L131.7,279.3 L132.4,279.1 L133.1,278.9 L133.8,278.8 L134.5,278.9 L135.2,278.8 L135.9,279.0 L136.6,279.4 L137.3,279.3 L138.0,279.8 L138.0,280.2 L137.3,279.9 L136.6,280.2 L135.9,279.9 L135.2,279.9 L134.5,280.0 L133.8,279.9 L133.1,280.0 L132.4,280.1 L131.7,280.2 L131.0,280.4Z M148.0,279.9 L148.7,279.4 L149.4,279.1 L150.1,279.2 L150.8,278.8 L151.5,278.7 L152.2,278.8 L152.9,279.1 L153.6,278.9 L154.3,279.3 L155.0,279.5 L155.0,280.3 L154.3,280.2 L153.6,280.0 L152.9,280.2 L152.2,280.0 L151.5,279.8 L150.8,279.8 L150.1,280.1 L149.4,279.9 L148.7,280.0 L148.0,280.3Z" fill="#111" opacity="1"/><path d="M184.5,279.5 L185.4,279.3 L186.3,279.0 L187.2,278.8 L188.1,278.7 L189.0,278.7 L189.9,278.8 L190.8,278.9 L191.7,279.2 L192.6,279.4 L193.5,279.8 L193.5,280.2 L192.6,280.2 L191.7,280.1 L190.8,280.1 L189.9,280.1 L189.0,280.1 L188.1,280.1 L187.2,280.2 L186.3,280.3 L185.4,280.4 L184.5,280.5Z M201.5,279.8 L202.4,279.4 L203.3,279.2 L204.2,278.9 L205.1,278.8 L206.0,278.7 L206.9,278.7 L207.8,278.8 L208.7,279.0 L209.6,279.3 L210.5,279.5 L210.5,280.5 L209.6,280.4 L208.7,280.3 L207.8,280.2 L206.9,280.1 L206.0,280.1 L205.1,280.1 L204.2,280.1 L203.3,280.1 L202.4,280.2 L201.5,280.2Z" fill="#111" opacity="1"/><path d="M16.5,333.5 L17.8,333.0 L19.1,332.5 L20.4,332.2 L21.7,332.0 L23.0,331.9 L24.3,332.1 L25.6,332.3 L26.9,332.8 L28.2,333.3 L29.5,333.8 L29.5,334.6 L28.2,334.4 L26.9,334.2 L25.6,334.1 L24.3,334.1 L23.0,334.1 L21.7,334.2 L20.4,334.3 L19.1,334.5 L17.8,334.7 L16.5,334.9Z M36.5,333.8 L37.8,333.3 L39.1,332.8 L40.4,332.3 L41.7,332.1 L43.0,331.9 L44.3,332.0 L45.6,332.2 L46.9,332.5 L48.2,333.0 L49.5,333.5 L49.5,334.9 L48.2,334.7 L46.9,334.5 L45.6,334.3 L44.3,334.2 L43.0,334.1 L41.7,334.1 L40.4,334.1 L39.1,334.2 L37.8,334.4 L36.5,334.6Z" fill="#111" opacity="1"/><path d="M76.5,333.8 L77.2,333.5 L77.9,333.3 L78.6,333.1 L79.3,333.0 L80.0,333.0 L80.7,333.1 L81.4,333.2 L82.1,333.4 L82.8,333.7 L83.5,334.0 L83.5,334.4 L82.8,334.3 L82.1,334.3 L81.4,334.2 L80.7,334.2 L80.0,334.2 L79.3,334.2 L78.6,334.3 L77.9,334.4 L77.2,334.5 L76.5,334.6Z M93.5,334.0 L94.2,333.7 L94.9,333.4 L95.6,333.2 L96.3,333.1 L97.0,333.0 L97.7,333.0 L98.4,333.1 L99.1,333.3 L99.8,333.5 L100.5,333.8 L100.5,334.6 L99.8,334.5 L99.1,334.4 L98.4,334.3 L97.7,334.2 L97.0,334.2 L96.3,334.2 L95.6,334.2 L94.9,334.3 L94.2,334.3 L93.5,334.4Z" fill="#111" opacity="1"/><path d="M128.5,333.7 L129.2,333.2 L129.9,332.8 L130.6,332.5 L131.3,332.3 L132.0,332.3 L132.7,332.4 L133.4,332.6 L134.1,333.0 L134.8,333.4 L135.5,333.9 L135.5,334.5 L134.8,334.2 L134.1,334.0 L133.4,333.8 L132.7,333.8 L132.0,333.7 L131.3,333.8 L130.6,334.0 L129.9,334.2 L129.2,334.4 L128.5,334.7Z M150.5,333.9 L151.2,333.4 L151.9,333.0 L152.6,332.6 L153.3,332.4 L154.0,332.3 L154.7,332.3 L155.4,332.5 L156.1,332.8 L156.8,333.2 L157.5,333.7 L157.5,334.7 L156.8,334.4 L156.1,334.2 L155.4,334.0 L154.7,333.8 L154.0,333.7 L153.3,333.8 L152.6,333.8 L151.9,334.0 L151.2,334.2 L150.5,334.5Z" fill="#2a3444" opacity="0.6"/><path d="M186.0,333.6 L186.6,333.3 L187.2,333.1 L187.8,332.9 L188.4,332.8 L189.0,332.8 L189.6,332.8 L190.2,333.0 L190.8,333.3 L191.4,333.6 L192.0,333.9 L192.0,334.5 L191.4,334.5 L190.8,334.4 L190.2,334.4 L189.6,334.4 L189.0,334.4 L188.4,334.5 L187.8,334.5 L187.2,334.6 L186.6,334.7 L186.0,334.8Z M203.0,333.9 L203.6,333.6 L204.2,333.3 L204.8,333.0 L205.4,332.8 L206.0,332.8 L206.6,332.8 L207.2,332.9 L207.8,333.1 L208.4,333.3 L209.0,333.6 L209.0,334.8 L208.4,334.7 L207.8,334.6 L207.2,334.5 L206.6,334.5 L206.0,334.4 L205.4,334.4 L204.8,334.4 L204.2,334.4 L203.6,334.5 L203.0,334.5Z" fill="#111" opacity="1"/><path d="M20.0,387.9 L20.7,387.6 L21.4,387.4 L22.1,387.2 L22.8,387.1 L23.5,387.1 L24.2,387.2 L24.9,387.3 L25.6,387.5 L26.3,387.8 L27.0,388.1 L27.0,388.5 L26.3,388.4 L25.6,388.4 L24.9,388.3 L24.2,388.3 L23.5,388.3 L22.8,388.3 L22.1,388.4 L21.4,388.5 L20.7,388.6 L20.0,388.7Z M39.0,388.1 L39.7,387.8 L40.4,387.5 L41.1,387.3 L41.8,387.2 L42.5,387.1 L43.2,387.1 L43.9,387.2 L44.6,387.4 L45.3,387.6 L46.0,387.9 L46.0,388.7 L45.3,388.6 L44.6,388.5 L43.9,388.4 L43.2,388.3 L42.5,388.3 L41.8,388.3 L41.1,388.3 L40.4,388.4 L39.7,388.4 L39.0,388.5Z" fill="#111" opacity="1"/><path d="M77.5,388.0 L78.3,387.5 L79.1,387.4 L79.9,386.9 L80.7,386.9 L81.5,387.0 L82.3,387.2 L83.1,387.2 L83.9,387.3 L84.7,387.5 L85.5,388.0 L85.5,388.6 L84.7,388.3 L83.9,388.3 L83.1,388.4 L82.3,388.6 L81.5,388.5 L80.7,388.4 L79.9,388.4 L79.1,388.8 L78.3,388.7 L77.5,389.0Z M91.5,387.9 L92.3,387.9 L93.1,387.6 L93.9,387.0 L94.7,386.9 L95.5,387.1 L96.3,387.0 L97.1,387.2 L97.9,387.2 L98.7,387.3 L99.5,387.7 L99.5,388.7 L98.7,388.5 L97.9,388.6 L97.1,388.7 L96.3,388.6 L95.5,388.6 L94.7,388.3 L93.9,388.3 L93.1,388.6 L92.3,388.7 L91.5,388.4Z" fill="#111" opacity="1"/><path d="M129.5,388.0 L130.3,387.5 L131.1,387.1 L131.9,386.8 L132.7,386.6 L133.5,386.6 L134.3,386.7 L135.1,386.9 L135.9,387.2 L136.7,387.7 L137.5,388.1 L137.5,388.5 L136.7,388.2 L135.9,388.0 L135.1,387.8 L134.3,387.6 L133.5,387.6 L132.7,387.7 L131.9,387.8 L131.1,388.1 L130.3,388.3 L129.5,388.6Z M148.5,388.1 L149.3,387.7 L150.1,387.2 L150.9,386.9 L151.7,386.7 L152.5,386.6 L153.3,386.6 L154.1,386.8 L154.9,387.1 L155.7,387.5 L156.5,388.0 L156.5,388.6 L155.7,388.3 L154.9,388.1 L154.1,387.8 L153.3,387.7 L152.5,387.6 L151.7,387.6 L150.9,387.8 L150.1,388.0 L149.3,388.2 L148.5,388.5Z" fill="#111" opacity="1"/><path d="M186.0,387.9 L186.8,387.7 L187.6,387.4 L188.4,387.3 L189.2,387.2 L190.0,387.1 L190.8,387.2 L191.6,387.3 L192.4,387.6 L193.2,387.8 L194.0,388.1 L194.0,388.5 L193.2,388.4 L192.4,388.3 L191.6,388.3 L190.8,388.3 L190.0,388.3 L189.2,388.3 L188.4,388.4 L187.6,388.5 L186.8,388.6 L186.0,388.7Z M201.0,388.1 L201.8,387.8 L202.6,387.6 L203.4,387.3 L204.2,387.2 L205.0,387.1 L205.8,387.2 L206.6,387.3 L207.4,387.4 L208.2,387.7 L209.0,387.9 L209.0,388.7 L208.2,388.6 L207.4,388.5 L206.6,388.4 L205.8,388.3 L205.0,388.3 L204.2,388.3 L203.4,388.3 L202.6,388.3 L201.8,388.4 L201.0,388.5Z" fill="#111" opacity="1"/><path d="M23.0,441.5 L23.6,441.0 L24.2,440.8 L24.8,440.7 L25.4,440.6 L26.0,440.6 L26.6,440.9 L27.2,440.7 L27.8,440.8 L28.4,441.5 L29.0,441.7 L29.0,442.1 L28.4,442.0 L27.8,441.4 L27.2,441.4 L26.6,441.8 L26.0,441.5 L25.4,441.6 L24.8,441.6 L24.2,441.7 L23.6,441.8 L23.0,442.2Z M37.0,441.8 L37.6,441.2 L38.2,441.2 L38.8,441.0 L39.4,440.6 L40.0,440.8 L40.6,440.8 L41.2,440.8 L41.8,440.9 L42.4,441.0 L43.0,441.3 L43.0,441.9 L42.4,441.8 L41.8,441.8 L41.2,441.8 L40.6,441.8 L40.0,441.7 L39.4,441.4 L38.8,441.8 L38.2,441.9 L37.6,441.7 L37.0,442.1Z" fill="#111" opacity="1"/><path d="M75.5,441.4 L76.4,440.9 L77.3,440.5 L78.2,440.2 L79.1,440.0 L80.0,440.0 L80.9,440.1 L81.8,440.3 L82.7,440.6 L83.6,441.1 L84.5,441.5 L84.5,441.9 L83.6,441.6 L82.7,441.4 L81.8,441.2 L80.9,441.0 L80.0,441.0 L79.1,441.1 L78.2,441.2 L77.3,441.5 L76.4,441.7 L75.5,442.0Z M92.5,441.5 L93.4,441.1 L94.3,440.6 L95.2,440.3 L96.1,440.1 L97.0,440.0 L97.9,440.0 L98.8,440.2 L99.7,440.5 L100.6,440.9 L101.5,441.4 L101.5,442.0 L100.6,441.7 L99.7,441.5 L98.8,441.2 L97.9,441.1 L97.0,441.0 L96.1,441.0 L95.2,441.2 L94.3,441.4 L93.4,441.6 L92.5,441.9Z" fill="#111" opacity="1"/><path d="M129.0,441.3 L129.8,440.9 L130.6,440.5 L131.4,440.2 L132.2,440.0 L133.0,439.9 L133.8,440.0 L134.6,440.3 L135.4,440.6 L136.2,441.0 L137.0,441.5 L137.0,441.9 L136.2,441.6 L135.4,441.4 L134.6,441.2 L133.8,441.1 L133.0,441.1 L132.2,441.1 L131.4,441.3 L130.6,441.5 L129.8,441.8 L129.0,442.1Z M149.0,441.5 L149.8,441.0 L150.6,440.6 L151.4,440.3 L152.2,440.0 L153.0,439.9 L153.8,440.0 L154.6,440.2 L155.4,440.5 L156.2,440.9 L157.0,441.3 L157.0,442.1 L156.2,441.8 L155.4,441.5 L154.6,441.3 L153.8,441.1 L153.0,441.1 L152.2,441.1 L151.4,441.2 L150.6,441.4 L149.8,441.6 L149.0,441.9Z" fill="#111" opacity="1"/><path d="M185.5,441.4 L186.2,441.1 L186.9,440.9 L187.6,440.7 L188.3,440.6 L189.0,440.6 L189.7,440.6 L190.4,440.8 L191.1,441.0 L191.8,441.2 L192.5,441.5 L192.5,441.9 L191.8,441.8 L191.1,441.7 L190.4,441.6 L189.7,441.6 L189.0,441.6 L188.3,441.7 L187.6,441.7 L186.9,441.8 L186.2,441.9 L185.5,442.0Z M202.5,441.5 L203.2,441.2 L203.9,441.0 L204.6,440.8 L205.3,440.6 L206.0,440.6 L206.7,440.6 L207.4,440.7 L208.1,440.9 L208.8,441.1 L209.5,441.4 L209.5,442.0 L208.8,441.9 L208.1,441.8 L207.4,441.7 L206.7,441.7 L206.0,441.6 L205.3,441.6 L204.6,441.6 L203.9,441.7 L203.2,441.8 L202.5,441.9Z" fill="#111" opacity="1"/><path d="M21.5,495.5 L22.1,495.2 L22.7,494.9 L23.3,494.8 L23.9,494.7 L24.5,494.6 L25.1,494.7 L25.7,494.9 L26.3,495.1 L26.9,495.4 L27.5,495.7 L27.5,496.1 L26.9,496.1 L26.3,496.0 L25.7,496.0 L25.1,495.9 L24.5,496.0 L23.9,496.0 L23.3,496.1 L22.7,496.1 L22.1,496.2 L21.5,496.3Z M38.5,495.7 L39.1,495.4 L39.7,495.1 L40.3,494.9 L40.9,494.7 L41.5,494.6 L42.1,494.7 L42.7,494.8 L43.3,494.9 L43.9,495.2 L44.5,495.5 L44.5,496.3 L43.9,496.2 L43.3,496.1 L42.7,496.1 L42.1,496.0 L41.5,496.0 L40.9,495.9 L40.3,496.0 L39.7,496.0 L39.1,496.1 L38.5,496.1Z" fill="#111" opacity="1"/><path d="M76.5,495.4 L77.0,495.3 L77.5,495.2 L78.0,495.2 L78.5,495.1 L79.0,495.2 L79.5,495.2 L80.0,495.3 L80.5,495.4 L81.0,495.5 L81.5,495.6 L81.5,496.2 L81.0,496.3 L80.5,496.4 L80.0,496.5 L79.5,496.6 L79.0,496.6 L78.5,496.7 L78.0,496.6 L77.5,496.6 L77.0,496.5 L76.5,496.4Z M95.5,495.6 L96.0,495.5 L96.5,495.4 L97.0,495.3 L97.5,495.2 L98.0,495.2 L98.5,495.1 L99.0,495.2 L99.5,495.2 L100.0,495.3 L100.5,495.4 L100.5,496.4 L100.0,496.5 L99.5,496.6 L99.0,496.6 L98.5,496.7 L98.0,496.6 L97.5,496.6 L97.0,496.5 L96.5,496.4 L96.0,496.3 L95.5,496.2Z" fill="#111" opacity="1"/><path d="M130.0,495.5 L130.8,495.1 L131.6,495.2 L132.4,494.8 L133.2,495.0 L134.0,494.6 L134.8,495.1 L135.6,495.1 L136.4,495.4 L137.2,495.7 L138.0,495.9 L138.0,496.3 L137.2,496.2 L136.4,496.1 L135.6,495.9 L134.8,496.0 L134.0,495.5 L133.2,496.0 L132.4,495.8 L131.6,496.0 L130.8,495.9 L130.0,496.1Z M148.0,495.8 L148.8,495.2 L149.6,495.3 L150.4,494.9 L151.2,494.8 L152.0,494.9 L152.8,494.9 L153.6,494.9 L154.4,495.3 L155.2,495.4 L156.0,495.5 L156.0,496.1 L155.2,496.1 L154.4,496.2 L153.6,495.8 L152.8,495.8 L152.0,495.8 L151.2,495.7 L150.4,495.6 L149.6,496.0 L148.8,495.7 L148.0,496.1Z" fill="#111" opacity="1"/><path d="M186.0,495.5 L186.6,495.2 L187.2,495.0 L187.8,494.8 L188.4,494.7 L189.0,494.7 L189.6,494.8 L190.2,494.9 L190.8,495.1 L191.4,495.4 L192.0,495.7 L192.0,496.1 L191.4,496.0 L190.8,496.0 L190.2,495.9 L189.6,495.9 L189.0,495.9 L188.4,495.9 L187.8,496.0 L187.2,496.1 L186.6,496.2 L186.0,496.3Z M203.0,495.7 L203.6,495.4 L204.2,495.1 L204.8,494.9 L205.4,494.8 L206.0,494.7 L206.6,494.7 L207.2,494.8 L207.8,495.0 L208.4,495.2 L209.0,495.5 L209.0,496.3 L208.4,496.2 L207.8,496.1 L207.2,496.0 L206.6,495.9 L206.0,495.9 L205.4,495.9 L204.8,495.9 L204.2,496.0 L203.6,496.0 L203.0,496.1Z" fill="#111" opacity="1"/></svg><svg class="a" style="left:0;top:0" width="320" height="640"><path d="M263.5,105.6 Q266,116 270.8,123.3 Q274,130 279,131.7 Q284,132 288.5,129.6" fill="none" stroke="#111" stroke-width="0.9" stroke-dasharray="2 1.5"/><path d="M260.8,166.5 Q270,168.5 280,168.5 Q290,168.5 299.6,166 Q299.5,172 296,175.5 Q288,180 280,180 Q270,180 264,176.5 Q261,173 260.8,166.5Z" fill="#111"/><path d="M263.5,238 Q262,222 268.7,215 Q274,208 280,208.7 Q288,209 294.8,217 Q299,224 298.3,233.7" fill="none" stroke="#111" stroke-width="0.9" stroke-dasharray="2 1.8"/><path d="M261.5,280.5 Q267,274 276.5,279.5 M285,279.5 Q294,274 302,279" fill="none" stroke="#111" stroke-width="2.3" stroke-dasharray="3 0.5"/><path d="M272,345 Q271,335 273,328 Q276,321.5 281,321.8 Q287,322 289,328 Q290.5,334 290.5,340" fill="none" stroke="#111" stroke-width="2"/><path d="M271.5,331 V345.5" stroke="#111" stroke-width="3.4" stroke-dasharray="2.2 0.8"/><circle cx="289.5" cy="343" r="1.6" fill="#111"/><circle cx="287.5" cy="339.5" r="1" fill="#111"/><path d="M262,387.5 Q270,381 276,381 Q281,380 283,382 Q286,380 291,381 Q296,383 300,387.5 Q292,396 282,396.5 Q270,396 262,387.5Z" fill="#2a3340" opacity="0.5"/><path d="M262,388 Q281,385 300,388" stroke="#111" stroke-width="0.9" fill="none"/><path d="M261,444 Q281,433 301.5,443.5" fill="none" stroke="#1a1f28" stroke-width="2"/><path d="M261,496 Q268,492 276.5,495.5 M285,495 Q292,491.5 300,495.5" fill="none" stroke="#111" stroke-width="1.8" stroke-dasharray="3 0.8"/><path d="M259.5,550 Q268,544 276,549 Q280,552 284,549 Q292,544 302,550 M268,552 Q272,555 276,551 M286,551 Q292,555 298,551" fill="none" stroke="#2a2f38" stroke-width="0.8" stroke-dasharray="1.5 1.5" opacity="0.8"/><path d="M270.8,593 Q266,600 267.7,607.5 Q269,613 274,614.8 Q278,618 282.3,618.3" fill="none" stroke="#111" stroke-width="0.9" stroke-dasharray="1.6 1.2"/><circle cx="274" cy="613.5" r="2.3" fill="#111"/><path d="M286,615.5 L288.5,611.5 L291,615.5Z" fill="#111"/></svg><!--/THUMBS-->
<div class="a" style="left:315.3px;top:90px;width:890.3px;height:632.5px;background:#fff;border-radius:5px;box-shadow:inset 0 1px 0 #d0d6de,inset 1px 0 0 #e2e7ec"></div>

<!--FACE--><svg class="a" style="left:0;top:0" width="1366" height="768"><defs><pattern id="tex" width="3" height="3" patternUnits="userSpaceOnUse"><rect x="0" y="0" width="3" height="1" fill="#ebebeb"/><rect x="0" y="0" width="1" height="3" fill="#eeeeee"/></pattern></defs><path d="M535,198 L603,175 L640,168 L999,167 L999,264 L1004,300 L1004,430 L999,470 L999,672 L537,672Z" fill="url(#tex)" opacity="0.3"/><path d="M662,430 a27,24 0 1 0 0.1,0 M868,418 a27,24 0 1 0 0.1,0" fill="none" stroke="#f0eef0" stroke-width="1.4"/><path d="M635,235 Q700,218 810.8,216 Q850,218 876,230 M682,200 Q740,193 764,195 Q810,200 834,207 Q860,214 881,225.6 M642.0,300.5 L689.0,249.0 M658.5,310.0 L705.0,253.7 M698.4,310.0 L754.6,237.0 M726.5,305.0 L764.0,253.7 M750.0,305.0 L803.7,249.0 M782.7,305.0 L831.8,239.6 M810.8,305.0 L857.6,249.0 M620.0,285.0 L650.0,250.0 M764.0,188.0 L810.8,218.5 M799.0,185.8 L853.0,225.6 M829.5,176.4 L876.0,225.6 M862.0,181.0 L892.7,237.0 M905.0,270.0 L935.0,345.0 M915.0,270.0 L945.0,340.0 M585.0,330.0 L580.0,375.0 M600.0,300.0 L592.0,370.0 M615.0,480.0 L625.0,525.0 M630.0,485.0 L640.0,530.0 M905.0,480.0 L920.0,525.0 M890.0,490.0 L900.0,528.0 M682.5,364.0 L697.0,364.0 L697.0,381.0 L682.5,381.0 L682.5,364.0 M845.0,357.0 L858.0,357.0 L858.0,375.0 L845.0,375.0 L845.0,357.0 M644.0,663.6 L702.4,669.0 M650.0,665.0 L700.0,671.0" fill="none" stroke="#d6d3da" stroke-width="3.6" stroke-linejoin="round" opacity="1"/><path d="M635,235 Q700,218 810.8,216 Q850,218 876,230 M682,200 Q740,193 764,195 Q810,200 834,207 Q860,214 881,225.6 M642.0,300.5 L689.0,249.0 M658.5,310.0 L705.0,253.7 M698.4,310.0 L754.6,237.0 M726.5,305.0 L764.0,253.7 M750.0,305.0 L803.7,249.0 M782.7,305.0 L831.8,239.6 M810.8,305.0 L857.6,249.0 M620.0,285.0 L650.0,250.0 M764.0,188.0 L810.8,218.5 M799.0,185.8 L853.0,225.6 M829.5,176.4 L876.0,225.6 M862.0,181.0 L892.7,237.0 M905.0,270.0 L935.0,345.0 M915.0,270.0 L945.0,340.0 M585.0,330.0 L580.0,375.0 M600.0,300.0 L592.0,370.0 M615.0,480.0 L625.0,525.0 M630.0,485.0 L640.0,530.0 M905.0,480.0 L920.0,525.0 M890.0,490.0 L900.0,528.0 M682.5,364.0 L697.0,364.0 L697.0,381.0 L682.5,381.0 L682.5,364.0 M845.0,357.0 L858.0,357.0 L858.0,375.0 L845.0,375.0 L845.0,357.0 M644.0,663.6 L702.4,669.0 M650.0,665.0 L700.0,671.0" fill="none" stroke="#fff" stroke-width="1.6" stroke-linejoin="round"/><path d="M749.7,527.3 L753.8,549.5 L799.7,549.5 L799.7,527.3 M687.5,541.0 L713.5,546.8 M799.7,541.0 L816.4,545.4 M622.3,289.4 L618.7,344.0 L604.0,375.4 L579.0,383.7 M895.4,244.6 L891.0,284.0 L905.8,330.0 L930.8,363.3 L947.5,369.6 L960.0,355.0 M943.0,426.0 L947.5,430.0 L937.0,517.5 M583.3,460.8 L602.0,452.5 L620.8,465.0 L650.0,490.0 L700.0,506.7 L744.0,526.0 L749.7,527.3 M799.7,527.3 L832.0,512.7 L858.0,500.9 L897.5,475.8 L930.8,446.7 L943.0,426.0 L972.5,430.0 M622.3,289.4 L642.0,296.9 L657.0,309.3 L679.6,311.8 L704.5,319.3 L719.4,309.3 L754.0,309.3 L784.0,315.5 L816.5,309.3 L846.3,291.9 L861.3,294.4 L873.7,306.8 M898.6,242.0 L853.8,274.5 L829.0,294.4 L814.0,309.3 M596.0,318.0 L610.0,300.0 L622.3,289.4 M760.5,340.0 L762.5,383.0 M760,382 A25.5,27 0 1 0 760.1,382 M708.6,449.0 L710.0,455.0 L754.0,458.0 L795.8,456.0 L829.7,438.5 M755.5,458.0 L790.6,458.0 L790.6,467.0 L755.5,467.0 L755.5,458.0 M746,459 C752,474 760,483 772,483 C786,483 794,474 798.4,460.6 M750,493 C756,502 766,504 773,504 C782,504 790,501 795.8,490.6 M677,389 Q692,405 710,388 M840,382 Q856,397 872,381 M693.0,350.0 L703.4,350.0 L703.4,363.0 L693.0,363.0 L693.0,350.0 M851.0,345.0 L860.0,345.0 L860.0,357.0 L851.0,357.0 L851.0,345.0 M699.6,599.6 L708.0,669.0 M709.3,608.0 L712.0,671.0 M831.7,598.0 L831.7,671.0" fill="none" stroke="#9a969e" stroke-width="4.2" stroke-linejoin="round" opacity="1"/><path d="M749.7,527.3 L753.8,549.5 L799.7,549.5 L799.7,527.3 M687.5,541.0 L713.5,546.8 M799.7,541.0 L816.4,545.4 M622.3,289.4 L618.7,344.0 L604.0,375.4 L579.0,383.7 M895.4,244.6 L891.0,284.0 L905.8,330.0 L930.8,363.3 L947.5,369.6 L960.0,355.0 M943.0,426.0 L947.5,430.0 L937.0,517.5 M583.3,460.8 L602.0,452.5 L620.8,465.0 L650.0,490.0 L700.0,506.7 L744.0,526.0 L749.7,527.3 M799.7,527.3 L832.0,512.7 L858.0,500.9 L897.5,475.8 L930.8,446.7 L943.0,426.0 L972.5,430.0 M622.3,289.4 L642.0,296.9 L657.0,309.3 L679.6,311.8 L704.5,319.3 L719.4,309.3 L754.0,309.3 L784.0,315.5 L816.5,309.3 L846.3,291.9 L861.3,294.4 L873.7,306.8 M898.6,242.0 L853.8,274.5 L829.0,294.4 L814.0,309.3 M596.0,318.0 L610.0,300.0 L622.3,289.4 M760.5,340.0 L762.5,383.0 M760,382 A25.5,27 0 1 0 760.1,382 M708.6,449.0 L710.0,455.0 L754.0,458.0 L795.8,456.0 L829.7,438.5 M755.5,458.0 L790.6,458.0 L790.6,467.0 L755.5,467.0 L755.5,458.0 M746,459 C752,474 760,483 772,483 C786,483 794,474 798.4,460.6 M750,493 C756,502 766,504 773,504 C782,504 790,501 795.8,490.6 M677,389 Q692,405 710,388 M840,382 Q856,397 872,381 M693.0,350.0 L703.4,350.0 L703.4,363.0 L693.0,363.0 L693.0,350.0 M851.0,345.0 L860.0,345.0 L860.0,357.0 L851.0,357.0 L851.0,345.0 M699.6,599.6 L708.0,669.0 M709.3,608.0 L712.0,671.0 M831.7,598.0 L831.7,671.0" fill="none" stroke="#fff" stroke-width="2.2" stroke-linejoin="round"/><path d="M691.6,344.7 a22,32 0 1 0 0.1,0 M855.7,337 a23.5,30.5 0 1 0 0.1,0 M713.5,546.8 C735,566 760,576 778,575 C800,574 814,566 817.8,549.5 M649.5,631.6 L708.0,649.7 M836.0,653.8 L886.0,640.0 M713.5,656.6 L830.3,656.6" fill="none" stroke="#9aa8cc" stroke-width="4.2" stroke-linejoin="round" opacity="1"/><path d="M691.6,344.7 a22,32 0 1 0 0.1,0 M855.7,337 a23.5,30.5 0 1 0 0.1,0 M713.5,546.8 C735,566 760,576 778,575 C800,574 814,566 817.8,549.5 M649.5,631.6 L708.0,649.7 M836.0,653.8 L886.0,640.0 M713.5,656.6 L830.3,656.6" fill="none" stroke="#fff" stroke-width="2.2" stroke-linejoin="round"/><path d="M581.0,304.0 L595.0,284.4 L598.7,259.5 L606.0,250.0 L619.8,234.6 L636.0,222.0 L652.0,212.0 L670.0,203.0 L689.5,194.8 L705.0,187.0 L722.0,179.9 L750.0,176.0 L779.0,173.6 L829.0,172.4 L873.7,177.4 L901.0,182.4 L904.0,188.0 L906.0,212.0 L898.6,242.0 L895.4,244.6 M895.4,244.6 C920,262 948,290 955,325 L960,355 C985,354 1004,368 1004,392 C1004,414 990,428 972.5,430 L960,480 L945.4,521.7 L908,528.5 L885,532 L802.5,541 M581,304 L575,315 L566.7,381.7 C549,382 537.5,398 537.5,421 C537.5,446 550,461 583.3,460.8 L604,533.7 L687.5,540 M688.5,541.0 L663.5,596.8 L635.6,658.0 L638.0,671.0 M816.4,545.4 L847.0,551.0 L872.0,591.0 L886.0,635.8 L894.3,671.0" fill="none" stroke="#857676" stroke-width="3.8" stroke-linejoin="round" opacity="1"/><path d="M581.0,304.0 L595.0,284.4 L598.7,259.5 L606.0,250.0 L619.8,234.6 L636.0,222.0 L652.0,212.0 L670.0,203.0 L689.5,194.8 L705.0,187.0 L722.0,179.9 L750.0,176.0 L779.0,173.6 L829.0,172.4 L873.7,177.4 L901.0,182.4 L904.0,188.0 L906.0,212.0 L898.6,242.0 L895.4,244.6 M895.4,244.6 C920,262 948,290 955,325 L960,355 C985,354 1004,368 1004,392 C1004,414 990,428 972.5,430 L960,480 L945.4,521.7 L908,528.5 L885,532 L802.5,541 M581,304 L575,315 L566.7,381.7 C549,382 537.5,398 537.5,421 C537.5,446 550,461 583.3,460.8 L604,533.7 L687.5,540 M688.5,541.0 L663.5,596.8 L635.6,658.0 L638.0,671.0 M816.4,545.4 L847.0,551.0 L872.0,591.0 L886.0,635.8 L894.3,671.0" fill="none" stroke="#fff" stroke-width="1.8" stroke-linejoin="round"/><path d="M638,671.5 H895" stroke="#222" stroke-width="1.2"/></svg><!--/FACE-->
<div class="a lbl" style="left:45px;top:575px;letter-spacing:0.4px">Scaling</div>
<div class="a lbl" style="left:162px;top:575px">Opacity</div>

<div class="btn" style="left:133px;top:620px;width:100px;height:22px;line-height:19px">Delete</div>
<div class="btn" style="left:133px;top:648px;width:100px;height:22px;line-height:19px">Undo Scaling</div>

<!-- RIGHT -->
<div class="a lbl" style="left:1213px;top:93px">Hi, anonymous!</div>
<div class="btn" style="left:1338px;top:90px;width:23px;height:22px;line-height:19px">?</div>
<div class="btn dis" style="left:1211px;top:118px;width:150px;height:22px;line-height:19px">crop background</div>
<div class="chk" style="left:1211px;top:147px"></div>
<div class="a lbl" style="left:1232px;top:149px;color:#6b8aa9;letter-spacing:0.55px">show crop area</div>
<div class="btn" style="left:1211px;top:170px;width:150px;height:22px;line-height:19px">clear all</div>
<div class="btn" style="left:1211px;top:198px;width:150px;height:22px;line-height:19px">duplicate this</div>
<div class="btn" style="left:1211px;top:226px;width:150px;height:22px;line-height:19px">save face</div>
<div class="btn" style="left:1211px;top:254px;width:150px;height:22px;line-height:19px">load face</div>
<div class="btn" style="left:1211px;top:293px;width:150px;height:22px;line-height:19px">snapshot</div>
<div class="btn dis" style="left:1211px;top:321px;width:150px;height:22px;line-height:19px">this face on Web</div>
<div class="btn" style="left:1211px;top:349px;width:150px;height:22px;line-height:19px">print face</div>

<div class="a lbl" style="left:1235px;top:408px">Load background:</div>
<div class="a" style="left:1211px;top:429px;width:121px;height:22px;background:#fff;border-bottom:1px solid #aab"></div>
<div class="btn" style="left:1332px;top:429px;width:29px;height:22px;line-height:19px">...</div>
<div class="a" style="left:1216px;top:458px;width:14px;height:14px;border:1px solid #4c5769"></div>
<div class="a lbl" style="left:1237px;top:460px;color:#6b8aa9">use as background</div>

<div class="a lbl" style="left:1237px;top:508px;letter-spacing:0.65px">Background scale</div>
<div class="a lbl" style="left:1231px;top:556px;letter-spacing:0.63px">Background opacity</div>
<div class="btn dis" style="left:1240px;top:577px;width:91px;height:22px;line-height:19px">clear image</div>
<div class="btn" style="left:1251px;top:611px;width:70px;height:65px;line-height:63px">LOGIN</div>
<div class="btn" style="left:1251px;top:682px;width:70px;height:22px;line-height:19px">register</div>

<!--SLIDERS-->
<svg class="a" style="left:0;top:0" width="1366" height="728">
<defs>
<linearGradient id="thb" x1="0" y1="0" x2="0" y2="1"><stop offset="0" stop-color="#8a9090"/><stop offset="1" stop-color="#5a6266"/></linearGradient>
<linearGradient id="thl" x1="0" y1="0" x2="0" y2="1"><stop offset="0" stop-color="#d8dcdc"/><stop offset="1" stop-color="#9aa2a6"/></linearGradient>
<linearGradient id="sq" x1="0" y1="0" x2="0" y2="1"><stop offset="0" stop-color="#6b7a8c"/><stop offset="0.5" stop-color="#5e6d80"/><stop offset="0.5" stop-color="#4e5d72"/><stop offset="1" stop-color="#56657a"/></linearGradient>
</defs>
<!-- right sliders -->
<rect x="1223.5" y="491.5" width="127" height="1" fill="#7d7868"/><rect x="1223.5" y="492.5" width="127" height="1.2" fill="#a9adab"/>
<path d="M1285.8,487 Q1287,487 1288,489 L1291.5,496.5 Q1292,498.6 1290,498.6 H1281.6 Q1279.6,498.6 1280.1,496.5 L1283.6,489 Q1284.6,487 1285.8,487Z" fill="url(#thb)"/>
<rect x="1223.5" y="539.5" width="127" height="1" fill="#7d7868"/><rect x="1223.5" y="540.5" width="127" height="1.2" fill="#a9adab"/>
<path d="M1349.7,535 Q1350.9,535 1351.9,537 L1355.4,544.5 Q1355.9,546.6 1353.9,546.6 H1345.5 Q1343.5,546.6 1344,544.5 L1347.5,537 Q1348.5,535 1349.7,535Z" fill="url(#thb)"/>
<!-- left opacity slider -->
<rect x="140.8" y="607" width="87" height="1" fill="#7d7868"/><rect x="140.8" y="608" width="87" height="1.2" fill="#aab0ae"/>
<path d="M227.2,602.4 Q228.3,602.4 229,604 L232.5,611.3 Q233,613 231,613 H223.4 Q221.4,613 221.9,611.3 L225.4,604 Q226.1,602.4 227.2,602.4Z" fill="url(#thl)"/>
<!-- vertical scaling slider -->
<rect x="118" y="600.6" width="1" height="91" fill="#7d7868"/><rect x="119" y="600.6" width="1.2" height="91" fill="#aab0ae"/>
<path d="M112.8,689.2 L124,683.8 V694.5Z" fill="url(#thl)" stroke="#b8bebe" stroke-width="0.5" stroke-linejoin="round"/>
<!-- small square -->
<rect x="14.5" y="680.5" width="20" height="19" rx="3" fill="url(#sq)" stroke="#7b8797" stroke-width="1"/>
<!-- bottom horizontal slider -->
<rect x="17.8" y="703" width="86" height="1" fill="#7d7868"/><rect x="17.8" y="704" width="86" height="1.2" fill="#aab0ae"/>
<path d="M25.4,698.6 Q26.5,698.6 27.2,700.2 L30.7,707.1 Q31.2,708.8 29.2,708.8 H21.6 Q19.6,708.8 20.1,707.1 L23.6,700.2 Q24.3,698.6 25.4,698.6Z" fill="url(#thl)"/>
</svg>
<!--/SLIDERS-->
<!-- TASKBAR -->
<!--TASK--><svg class="a" style="left:0;top:728px" width="1366" height="40"><defs>
<linearGradient id="tbg" x1="0" x2="1"><stop offset="0" stop-color="#8ca1b7"/><stop offset="0.04" stop-color="#8fa4ba"/><stop offset="0.062" stop-color="#b3cbe4"/><stop offset="0.72" stop-color="#b6cee7"/><stop offset="0.79" stop-color="#8fa5bd"/><stop offset="1" stop-color="#8ca2b9"/></linearGradient>
<radialGradient id="orb" cx="0.5" cy="0.35" r="0.65"><stop offset="0" stop-color="#cfe4f2"/><stop offset="0.45" stop-color="#5d8fb6"/><stop offset="0.55" stop-color="#0f4e86"/><stop offset="0.85" stop-color="#1a7fc0"/><stop offset="1" stop-color="#1ed0f5"/></radialGradient>
<linearGradient id="tbb" x1="0" y1="0" x2="0" y2="1"><stop offset="0" stop-color="#e9f1f9" stop-opacity="0.85"/><stop offset="0.5" stop-color="#d2e2f2" stop-opacity="0.6"/><stop offset="1" stop-color="#c4d8ec" stop-opacity="0.5"/></linearGradient>
<linearGradient id="sd" x1="0" y1="0" x2="0" y2="1"><stop offset="0" stop-color="#c9d9ea"/><stop offset="0.3" stop-color="#8aa0b8"/><stop offset="1" stop-color="#a8c2dc"/></linearGradient>
<linearGradient id="opr" x1="0.2" y1="0" x2="0.8" y2="1"><stop offset="0" stop-color="#f26a5a"/><stop offset="0.5" stop-color="#c81818"/><stop offset="1" stop-color="#8a0606"/></linearGradient><radialGradient id="chr" cx="0.5" cy="0.5" r="0.5"><stop offset="0" stop-color="#fff"/></radialGradient>
</defs><rect x="0" y="0" width="1366" height="1" fill="#1e2532"/><rect x="0" y="1" width="1366" height="39" fill="url(#tbg)"/><rect x="0" y="1" width="1366" height="1" fill="#d3e3f3" opacity="0.9"/><circle cx="26.8" cy="19.8" r="18" fill="url(#orb)" stroke="#2a4a6a" stroke-width="0.8"/><g transform="translate(15.5,9.5)"><path d="M3,3.5 Q6,1.5 10,3 L8.5,10 Q5,8.5 1.5,10.5Z" fill="#f0662a"/><path d="M11.5,3.5 Q15,5 19.5,3 L18,10 Q14,12 10.5,10.5Z" fill="#7cbf3a"/><path d="M1,12 Q4.5,10 8,11.5 L6.5,18.5 Q3,17 -0.5,19Z" fill="#3a9ae0"/><path d="M10,12 Q13.5,13.5 17.5,11.5 L16,18.5 Q12,20.5 8.5,19Z" fill="#f8c52a"/></g><rect x="79" y="9" width="21" height="24" fill="#bcd9ee" stroke="#6a9ac0" stroke-width="0.8"/><rect x="77" y="8" width="21" height="24" fill="#bcd9ee" stroke="#6a9ac0" stroke-width="0.8"/><rect x="75" y="7" width="21" height="24" fill="#c6e0f2" stroke="#6a9ac0" stroke-width="0.8"/><circle cx="85.5" cy="19" r="8.4" fill="#f07a18"/><path d="M82.5,14.5 L91,19 L82.5,23.5Z" fill="#fff"/><path d="M136,13 H145 L146,11 H152 L153,13 H165 V32 H136Z" fill="#e8cf7a" stroke="#b89a48" stroke-width="0.8"/><rect x="139" y="8.5" width="4" height="2" fill="#3cb53c"/><rect x="148" y="10" width="3" height="2" fill="#d03030"/><rect x="155" y="12" width="3" height="2" fill="#3a8ae0"/><rect x="136" y="16" width="29" height="16" fill="#f3e09a" stroke="#b89a48" stroke-width="0.8"/><path d="M141,33 V23 H160 V33 M145,33 V27 H156 V33" fill="none" stroke="#4aa2d8" stroke-width="2.5"/><rect x="184" y="0.8" width="53" height="39" rx="2.5" fill="url(#tbb)" stroke="#7c90a6" stroke-width="0.9"/><rect x="239.5" y="1" width="2" height="39" fill="#d8e4f0" stroke="#8a9db2" stroke-width="0.6"/><circle cx="210" cy="19.5" r="14" fill="#e0443a"/><path d="M210,19.5 L196.5,23 A14,14 0 0 0 205,32.7Z" fill="#3aa84a"/><path d="M196.5,23 A14,14 0 0 1 198,12 L206,19.5Z" fill="#3aa84a"/><path d="M210,19.5 L224,19.5 A14,14 0 0 1 205,32.7Z" fill="#f8c828"/><circle cx="210" cy="19.5" r="6.3" fill="#fff"/><circle cx="210" cy="19.5" r="4.8" fill="#3a78c8"/><path fill-rule="evenodd" fill="url(#opr)" d="M261,19.2 A14,14.2 0 1 0 289,19.2 A14,14.2 0 1 0 261,19.2Z M270.5,19.4 A4.5,10.8 0 1 0 279.5,19.4 A4.5,10.8 0 1 0 270.5,19.4Z"/><ellipse cx="275" cy="19.4" rx="5.3" ry="11.6" fill="none" stroke="#e84838" stroke-width="0.8"/><rect x="307.8" y="0.8" width="58.4" height="39" rx="2.5" fill="url(#tbb)" stroke="#7c90a6" stroke-width="0.9"/><rect x="321.5" y="7.5" width="31" height="24" rx="1" fill="#fefefe" stroke="#2a5aa8" stroke-width="1.5"/><rect x="321" y="7" width="32" height="3.5" fill="#3a6ad0"/><rect x="369.8" y="0.8" width="58.8" height="39" rx="2.5" fill="url(#tbb)" stroke="#7c90a6" stroke-width="0.9"/><circle cx="398.5" cy="19.5" r="13" fill="#1fa0e4"/><circle cx="392" cy="12" r="6" fill="#1fa0e4"/><circle cx="405" cy="27" r="6" fill="#1fa0e4"/><text x="398.5" y="26.5" font-size="20" font-weight="bold" fill="#fff" text-anchor="middle" font-family="Liberation Sans">S</text><text x="1109" y="22" font-size="12" fill="#eef2f6" font-family="Liberation Sans">UK</text><g transform="translate(1132,12)"><rect x="0.5" y="3.5" width="15" height="9" rx="1" fill="#c8c8c8" stroke="#777" stroke-width="1"/><path d="M3,6 H13 M3,8.5 H13 M4.5,10.5 H11.5" stroke="#888" stroke-width="0.8"/><path d="M6,3.5 Q8,0 12,1 L15,0" fill="none" stroke="#777" stroke-width="0.9"/></g><path d="M1158.5,23 L1163,18.5 L1167.5,23Z" fill="#fff" stroke="#7a8aa0" stroke-width="0.5"/><g transform="translate(1180,11)" fill="#fff" stroke="#555" stroke-width="0.5"><path d="M0.5,2 L6.5,1 V7.5 H0.5Z"/><path d="M7.5,0.8 L15,0 V7.5 H7.5Z"/><path d="M0.5,8.5 H6.5 V15 L0.5,14Z"/><path d="M7.5,8.5 H15 V15.8 L7.5,15Z"/></g><g transform="translate(1202,11)"><rect x="4" y="4.5" width="11" height="8.5" fill="#6a7e96" stroke="#fff" stroke-width="1.4"/><path d="M6,15.5 H13" stroke="#fff" stroke-width="1.4"/><path d="M1.5,0 V5 H4.5 V0 M3,5 V17" fill="none" stroke="#fff" stroke-width="1.2"/><path d="M1.5,0 V5 H4.5 V0 M3,5 V17" fill="none" stroke="#222" stroke-width="0.4"/></g><g transform="translate(1228,11)"><rect x="1" y="3" width="9" height="13" rx="1" fill="#fff" stroke="#333" stroke-width="0.8"/><rect x="3" y="1.5" width="9" height="13" rx="1" fill="#fff" stroke="#333" stroke-width="0.8"/><path d="M8,5 H15 V9 Q15,11 11.5,11 Q8,11 8,9Z M9.5,5 V2 M13.5,5 V2 M11.5,11 V16" fill="#fff" stroke="#222" stroke-width="1.1"/></g><g transform="translate(1253,12)"><circle cx="7.5" cy="8" r="6.5" fill="#5aaa1c"/><circle cx="3.5" cy="3.5" r="3" fill="#5aaa1c"/><circle cx="11.5" cy="12.5" r="3" fill="#5aaa1c"/><path d="M4.5,8 L6.8,10.3 L11,5.5" fill="none" stroke="#fff" stroke-width="1.8"/></g><rect x="1351.5" y="1" width="14.5" height="39" fill="url(#sd)" stroke="#6a7e96" stroke-width="0.7"/></svg><!--/TASK-->
<div class="a clock" style="left:1280px;top:735px;width:66px">11:29</div>
<div class="a clock" style="left:1280px;top:752px;width:66px;letter-spacing:-0.2px">28.07.2015</div>
</body></html>
